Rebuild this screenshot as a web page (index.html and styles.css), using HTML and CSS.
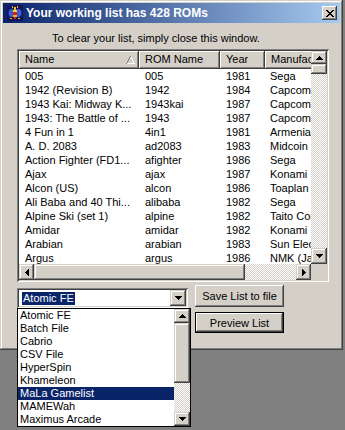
FILE: index.html
```html
<!DOCTYPE html>
<html>
<head>
<meta charset="utf-8">
<link rel="stylesheet" href="styles.css">
</head>
<body>
<div class="window">
  <div class="titlebar">
    <svg class="app-icon" width="16" height="16" viewBox="0 0 16 16">
      <rect width="16" height="16" fill="#141458"/>
      <ellipse cx="4.5" cy="8" rx="3" ry="4" fill="#3a5cd8"/>
      <ellipse cx="11.5" cy="8" rx="3" ry="4" fill="#3a5cd8"/>
      <rect x="7" y="2" width="2" height="3" fill="#f0c020"/>
      <rect x="5" y="1" width="1" height="2" fill="#f0c020"/>
      <rect x="10" y="1" width="1" height="2" fill="#f0c020"/>
      <rect x="6" y="5" width="4" height="2" fill="#f8d030"/>
      <rect x="6" y="7" width="4" height="3" fill="#d02020"/>
      <rect x="6" y="10" width="4" height="2" fill="#f0b020"/>
      <rect x="7" y="12" width="2" height="2" fill="#d02020"/>
      <rect x="3" y="13" width="2" height="1" fill="#f0c020"/>
      <rect x="11" y="13" width="2" height="1" fill="#f0c020"/>
    </svg>
    <span class="title">Your working list has 428 ROMs</span>
    <div class="close">
      <svg width="8" height="7" viewBox="0 0 8 7" shape-rendering="crispEdges">
        <path d="M0 0h2v1h1v1h2v-1h1v-1h2v1h-1v1h-1v1h-1v1h1v1h1v1h1v1h-2v-1h-1v-1h-2v1h-1v1h-2v-1h1v-1h1v-1h1v-1h-1v-1h-1v-1h-1z" fill="#000"/>
      </svg>
    </div>
  </div>
  <div class="body">
    <p class="hint">To clear your list, simply close this window.</p>
    <div class="listview">
      <div class="lv-main">
        <div class="lv-header">
          <div class="hcell">Name
            <svg class="sort" width="9" height="8" viewBox="0 0 9 8" shape-rendering="crispEdges">
              <path d="M4 0h1v1h-1zM3 1h1v2h-1zM2 3h1v2h-1zM1 5h1v2h-1zM0 7h1v1h-1z" fill="#808080"/>
              <path d="M5 1h1v2h-1zM6 3h1v2h-1zM7 5h1v2h-1zM1 7h8v1h-8z" fill="#fff"/>
            </svg>
          </div>
          <div class="hcell">ROM Name</div>
          <div class="hcell">Year</div>
          <div class="hcell">Manufacturer</div>
        </div>
        <div class="lv-rows">
          <div class="row"><span>005</span><span>005</span><span>1981</span><span>Sega</span></div>
          <div class="row"><span>1942 (Revision B)</span><span>1942</span><span>1984</span><span>Capcom</span></div>
          <div class="row"><span>1943 Kai: Midway K...</span><span>1943kai</span><span>1987</span><span>Capcom</span></div>
          <div class="row"><span>1943: The Battle of ...</span><span>1943</span><span>1987</span><span>Capcom</span></div>
          <div class="row"><span>4 Fun in 1</span><span>4in1</span><span>1981</span><span>Armenia</span></div>
          <div class="row"><span>A. D. 2083</span><span>ad2083</span><span>1983</span><span>Midcoin</span></div>
          <div class="row"><span>Action Fighter (FD1...</span><span>afighter</span><span>1986</span><span>Sega</span></div>
          <div class="row"><span>Ajax</span><span>ajax</span><span>1987</span><span>Konami</span></div>
          <div class="row"><span>Alcon (US)</span><span>alcon</span><span>1986</span><span>Toaplan</span></div>
          <div class="row"><span>Ali Baba and 40 Thi...</span><span>alibaba</span><span>1982</span><span>Sega</span></div>
          <div class="row"><span>Alpine Ski (set 1)</span><span>alpine</span><span>1982</span><span>Taito Corporation</span></div>
          <div class="row"><span>Amidar</span><span>amidar</span><span>1982</span><span>Konami</span></div>
          <div class="row"><span>Arabian</span><span>arabian</span><span>1983</span><span>Sun Electronics</span></div>
          <div class="row"><span>Argus</span><span>argus</span><span>1986</span><span>NMK (Jaleco)</span></div>
        </div>
      </div>
      <div class="vscroll">
        <div class="sbtn sbtn-up-short"><svg width="7" height="4" viewBox="0 0 7 4" shape-rendering="crispEdges"><path d="M3 0h1v1h1v1h1v1h1v1h-7v-1h1v-1h1v-1h1z"/></svg></div>
        <div class="thumb v-thumb"></div>
        <div class="track"></div>
        <div class="sbtn"><svg width="7" height="4" viewBox="0 0 7 4" shape-rendering="crispEdges"><path d="M0 0h7v1h-1v1h-1v1h-1v1h-1v-1h-1v-1h-1v-1h-1z"/></svg></div>
      </div>
      <div class="hscroll">
        <div class="sbtn hbtn"><svg width="4" height="7" viewBox="0 0 4 7" shape-rendering="crispEdges"><path d="M3 0h1v7h-1v-1h-1v-1h-1v-1h-1v-1h1v-1h1v-1h1z"/></svg></div>
        <div class="thumb h-thumb"></div>
        <div class="track"></div>
        <div class="sbtn hbtn"><svg width="4" height="7" viewBox="0 0 4 7" shape-rendering="crispEdges"><path d="M0 0h1v1h1v1h1v1h1v1h-1v1h-1v1h-1v1h-1z"/></svg></div>
      </div>
      <div class="corner"></div>
    </div>
    <div class="controls">
      <div class="combo-wrap">
        <div class="combo">
          <span class="combo-value">Atomic FE</span>
          <div class="sbtn combo-btn"><svg width="7" height="4" viewBox="0 0 7 4" shape-rendering="crispEdges"><path d="M0 0h7v1h-1v1h-1v1h-1v1h-1v-1h-1v-1h-1v-1h-1z"/></svg></div>
        </div>
        <div class="dropdown">
          <ul class="dd-items">
            <li>Atomic FE</li>
            <li>Batch File</li>
            <li>Cabrio</li>
            <li>CSV File</li>
            <li>HyperSpin</li>
            <li>Khameleon</li>
            <li class="selected">MaLa Gamelist</li>
            <li>MAMEWah</li>
            <li>Maximus Arcade</li>
          </ul>
          <div class="dd-scroll">
            <div class="sbtn dd-btn"><svg width="7" height="4" viewBox="0 0 7 4" shape-rendering="crispEdges"><path d="M3 0h1v1h1v1h1v1h1v1h-7v-1h1v-1h1v-1h1z"/></svg></div>
            <div class="thumb dd-thumb"></div>
            <div class="track"></div>
            <div class="sbtn dd-btn"><svg width="7" height="4" viewBox="0 0 7 4" shape-rendering="crispEdges"><path d="M0 0h7v1h-1v1h-1v1h-1v1h-1v-1h-1v-1h-1v-1h-1z"/></svg></div>
          </div>
        </div>
      </div>
      <div class="buttons">
        <button class="btn">Save List to file</button>
        <button class="btn btn-default"><span class="btn-inner">Preview List</span></button>
      </div>
    </div>
  </div>
</div>
</body>
</html>
```
FILE: styles.css
```css
* { box-sizing: border-box; }
html, body { margin: 0; padding: 0; }
body {
  background: #808080;
  width: 345px;
  height: 430px;
  overflow: hidden;
  font-family: "Liberation Sans", Arial, sans-serif;
  font-size: 11px;
  color: #000;
}
.window {
  width: 343px;
  height: 350px;
  background: #d4d0c8;
  padding: 3px;
  display: flex;
  flex-direction: column;
  box-shadow: inset -1px -1px #404040, inset 1px 1px #d4d0c8, inset -2px -2px #808080, inset 2px 2px #fff;
}
.titlebar {
  height: 20px;
  flex: none;
  display: flex;
  align-items: center;
  gap: 3px;
  padding: 0 3px 0 4px;
  background: linear-gradient(to right, #0a246a, #a6caf0);
}
.app-icon { flex: none; display: block; }
.title {
  flex: 1;
  color: #fff;
  font-weight: bold;
  font-size: 12px;
  white-space: nowrap;
}
.close {
  width: 15px;
  height: 14px;
  background: #d4d0c8;
  display: flex;
  align-items: center;
  justify-content: center;
  box-shadow: inset -1px -1px #404040, inset 1px 1px #fff, inset -2px -2px #808080;
}
.close svg { display: block; }
.body {
  flex: 1;
  padding: 8px 0 0 14px;
}
.hint {
  margin: 0 0 0 35px;
  height: 14px;
  line-height: 14px;
  white-space: nowrap;
}
.listview {
  margin-top: 4px;
  width: 312px;
  height: 233px;
  padding: 2px;
  background: #fff;
  display: grid;
  grid-template-columns: 1fr 16px;
  grid-template-rows: 1fr 16px;
  box-shadow: inset 1px 1px #808080, inset -1px -1px #fff, inset 2px 2px #404040, inset -2px -2px #d4d0c8;
}
.lv-main { overflow: hidden; }
.lv-header, .row {
  display: grid;
  grid-template-columns: 120px 81px 45px 100px;
  width: 346px;
}
.lv-header { height: 18px; }
.hcell {
  position: relative;
  background: #d4d0c8;
  padding: 0 0 0 6px;
  line-height: 17px;
  white-space: nowrap;
  overflow: hidden;
  box-shadow: inset -1px -1px #404040, inset 1px 1px #fff, inset -2px -2px #808080;
}
.sort { position: absolute; right: 4px; top: 5px; display: block; }
.row { height: 14px; line-height: 14px; }
.row span { padding-left: 6px; white-space: nowrap; overflow: hidden; }
.row span:nth-child(3) { padding-left: 6px; }
.row span:nth-child(4) { padding-left: 5px; }
.vscroll {
  display: flex;
  flex-direction: column;
}
.sbtn {
  flex: none;
  width: 16px;
  height: 16px;
  background: #d4d0c8;
  display: flex;
  align-items: center;
  justify-content: center;
  box-shadow: inset -1px -1px #404040, inset 1px 1px #d4d0c8, inset -2px -2px #808080, inset 2px 2px #fff;
}
.sbtn svg { display: block; fill: #000; }
.sbtn-up-short { height: 13px; }
.thumb {
  flex: none;
  background: #d4d0c8;
  box-shadow: inset -1px -1px #404040, inset 1px 1px #d4d0c8, inset -2px -2px #808080, inset 2px 2px #fff;
}
.v-thumb { height: 10px; }
.track {
  flex: 1;
  background: repeating-conic-gradient(#fff 0 25%, #d4d0c8 0 50%) 0 0 / 2px 2px;
}
.hscroll {
  display: flex;
  flex-direction: row;
}
.hbtn { width: 15px; }
.h-thumb { width: 211px; }
.corner { background: #d4d0c8; }
.controls {
  margin-top: 3px;
  display: flex;
  gap: 7px;
}
.combo-wrap {
  position: relative;
  margin-top: 3px;
  width: 171px;
  height: 20px;
}
.combo {
  height: 20px;
  padding: 2px;
  background: #fff;
  display: flex;
  align-items: center;
  justify-content: space-between;
  box-shadow: inset 1px 1px #808080, inset -1px -1px #fff, inset 2px 2px #404040, inset -2px -2px #d4d0c8;
}
.combo-value {
  margin-left: 3px;
  background: #0a246a;
  color: #fff;
  padding: 0 1px;
  line-height: 13px;
  height: 13px;
}
.dropdown {
  position: absolute;
  top: 20px;
  left: 0;
  width: 174px;
  height: 119px;
  background: #fff;
  border: 1px solid #000;
  display: grid;
  grid-template-columns: 1fr 16px;
  z-index: 2;
}
.dd-items {
  list-style: none;
  margin: 0;
  padding: 0;
}
.dd-items li {
  height: 13px;
  line-height: 13px;
  padding-left: 2px;
  white-space: nowrap;
}
.dd-items li.selected { background: #0a246a; color: #fff; }
.dd-scroll {
  display: flex;
  flex-direction: column;
}
.dd-btn { height: 14px; }
.dd-thumb { height: 60px; }
.buttons {
  display: flex;
  flex-direction: column;
  gap: 5px;
}
.btn {
  width: 89px;
  height: 22px;
  margin: 0;
  padding: 0;
  border: none;
  background: #d4d0c8;
  font-family: inherit;
  font-size: 11px;
  color: #000;
  box-shadow: inset -1px -1px #404040, inset 1px 1px #fff, inset -2px -2px #808080, inset 2px 2px #d4d0c8;
}
.btn-default {
  border: 1px solid #000;
  height: 21px;
  box-shadow: inset -1px -1px #404040, inset 1px 1px #fff, inset -2px -2px #808080;
}
```
